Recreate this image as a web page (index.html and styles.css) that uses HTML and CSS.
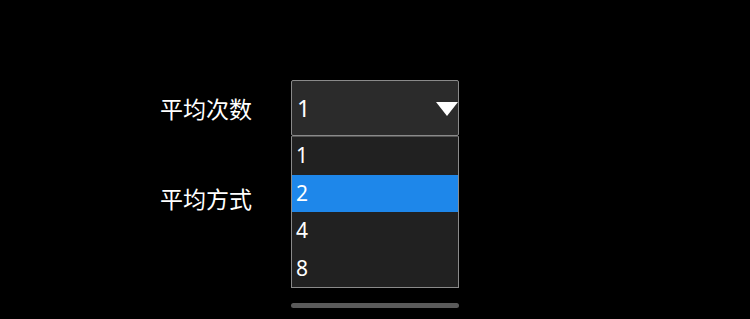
FILE: index.html
```html
<!DOCTYPE html>
<html lang="zh">
<head>
    <meta charset="UTF-8">
    <title>平均设置</title>
    <link rel="stylesheet" href="styles.css">
</head>
<body>
    <div class="panel">
        <div class="row">
            <div class="label">平均次数</div>
            <div class="select-wrap">
                <div class="select">
                    <span class="value">1</span>
                    <span class="arrow"></span>
                </div>
                <ul class="options">
                    <li>1</li>
                    <li class="active">2</li>
                    <li>4</li>
                    <li>8</li>
                </ul>
            </div>
        </div>
        <div class="row">
            <div class="label">平均方式</div>
            <div class="select-wrap"></div>
        </div>
    </div>
    <div class="scrollbar"></div>
</body>
</html>
```

FILE: styles.css
```css
body {
    margin: 0;
    width: 750px;
    height: 319px;
    background-color: #000;
    color: #fff;
    font-family: "Noto Sans", "Noto Sans CJK SC", sans-serif;
    overflow: hidden;
}
.panel {
    padding: 80px 0 0 160px;
    display: flex;
    flex-direction: column;
    gap: 34px;
}
.row {
    display: flex;
    align-items: center;
    height: 56px;
}
.label {
    width: 131px;
    font-size: 23px;
    font-family: "Noto Sans CJK SC", sans-serif;
}
.select-wrap {
    position: relative;
    width: 168px;
    height: 56px;
}
.select {
    box-sizing: border-box;
    height: 56px;
    background-color: #2b2b2b;
    border: 1px solid #8a8a8a;
    border-radius: 2px;
    display: flex;
    align-items: center;
    padding-left: 5px;
    font-size: 23px;
}
.value {
    flex: 1;
}
.arrow {
    width: 0;
    height: 0;
    border-left: 11px solid transparent;
    border-right: 11px solid transparent;
    border-top: 14px solid #fff;
    margin-right: 0;
    margin-top: 1px;
}
.options {
    position: absolute;
    top: 56px;
    left: 0;
    width: 168px;
    box-sizing: border-box;
    margin: 0;
    padding: 0;
    list-style: none;
    background-color: #212121;
    border: 1px solid #8a8a8a;
    border-top-color: #555;
}
.options li {
    height: 37.5px;
    line-height: 37.5px;
    padding-left: 4px;
    font-size: 21px;
}
.options li.active {
    background-color: #1e87ea;
}
.scrollbar {
    position: absolute;
    left: 291px;
    top: 303px;
    width: 168px;
    height: 5px;
    border-radius: 3px;
    background-color: #5a5a5a;
}
```
